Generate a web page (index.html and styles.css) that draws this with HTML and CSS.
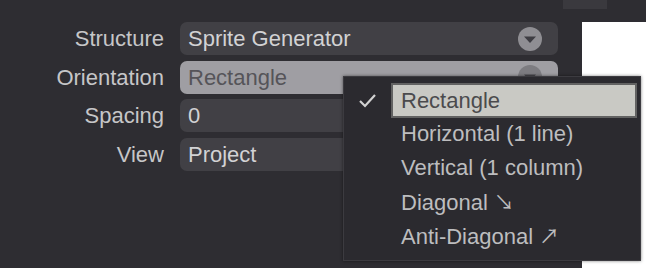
FILE: index.html
```html
<!DOCTYPE html>
<html>
<head>
<meta charset="utf-8">
<link rel="stylesheet" href="styles.css">
</head>
<body>
<div class="page">
  <div class="topbar"><div class="tab"></div></div>
  <div class="main">
    <div class="form">
      <div class="label">Structure</div>
      <div class="field"><span>Sprite Generator</span><span class="arrow"><svg width="24" height="24" viewBox="0 0 24 24"><circle cx="12" cy="12" r="12" fill="#8f8e93"/><path d="M6 9.5 H18 L12 16 Z" fill="#3e3d43"/></svg></span></div>
      <div class="label">Orientation</div>
      <div class="field active"><span>Rectangle</span><span class="arrow"><svg width="24" height="24" viewBox="0 0 24 24"><circle cx="12" cy="12" r="12" fill="#7d7c81"/><path d="M6 9.5 H18 L12 16 Z" fill="#48474c"/></svg></span></div>
      <div class="label">Spacing</div>
      <div class="field"><span>0</span></div>
      <div class="label">View</div>
      <div class="field"><span>Project</span></div>
    </div>
    <div class="canvas"></div>
  </div>
  <div class="menu">
    <div class="item selected"><svg class="check" width="20" height="16" viewBox="0 0 20 16"><path d="M2 8 L7 13 L17 2" fill="none" stroke="#d2d2d2" stroke-width="2.2"/></svg><span class="hl">Rectangle</span></div>
    <div class="item"><span>Horizontal (1 line)</span></div>
    <div class="item"><span>Vertical (1 column)</span></div>
    <div class="item"><span>Diagonal <span class="ar">↘</span></span></div>
    <div class="item"><span>Anti-Diagonal <span class="ar">↗</span></span></div>
  </div>
</div>
</body>
</html>
```
FILE: styles.css
```css
html, body {
  margin: 0;
  padding: 0;
  background: #2e2d32;
  width: 646px;
  height: 268px;
  overflow: hidden;
  font-family: "Liberation Sans", Arial, sans-serif;
}
.page {
  position: relative;
  width: 646px;
  height: 268px;
}
.topbar {
  height: 22px;
  display: flex;
}
.tab {
  margin-left: 563px;
  width: 44px;
  height: 9px;
  background: #3a393e;
}
.main {
  display: flex;
  height: 246px;
}
.form {
  display: grid;
  grid-template-columns: 164px 378px;
  column-gap: 16px;
  row-gap: 5.5px;
  grid-auto-rows: 33px;
  align-content: start;
}
.label {
  text-align: right;
  color: #c6c6c8;
  font-size: 22px;
  line-height: 33px;
}
.field {
  background: #414045;
  border-radius: 7px;
  color: #d2d2d4;
  font-size: 22px;
  line-height: 33px;
  padding-left: 8px;
  display: flex;
  justify-content: space-between;
  align-items: center;
}
.field.active {
  background: #9f9ea3;
  color: #555459;
}
.arrow {
  display: flex;
  margin-right: 16px;
}
.canvas {
  margin-left: 24px;
  flex: 1;
  background: #ffffff;
}
.menu {
  position: absolute;
  left: 343px;
  top: 76px;
  width: 298px;
  height: 185px;
  background: #2b2a2f;
  border: 1px solid #3c3b40;
  padding: 6px 0;
  box-sizing: border-box;
  box-shadow: 0 0 3px rgba(0,0,0,0.5);
}
.item {
  position: relative;
  height: 34.2px;
  display: flex;
  align-items: center;
  padding-left: 57px;
  color: #bdbdbf;
  font-size: 22px;
  line-height: 26px;
}
.item.selected {
  padding-left: 47px;
}
.check {
  position: absolute;
  left: 14px;
  top: 10px;
}
.hl {
  flex: 1;
  height: 35px;
  margin-right: 3px;
  box-sizing: border-box;
  background: #c9c9c4;
  border: 2px solid #626262;
  color: #4b4b4d;
  line-height: 31px;
  padding-left: 8px;
}
.ar {
  font-family: "Noto Sans CJK SC", "DejaVu Sans", sans-serif;
  font-size: 20px;
  line-height: 0;
}
```
